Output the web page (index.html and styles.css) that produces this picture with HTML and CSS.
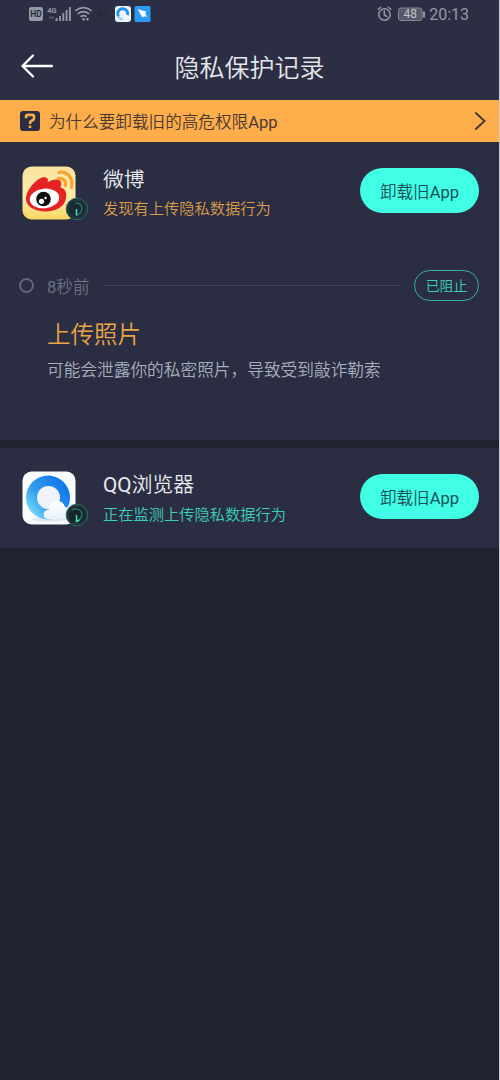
FILE: index.html
```html
<!DOCTYPE html>
<html lang="zh-CN">
<head>
<meta charset="utf-8">
<title>隐私保护记录</title>
<link rel="stylesheet" href="styles.css">
</head>
<body>
<main class="screen">
  <div class="status">
    <svg class="status-left" width="124" height="18" viewBox="28 5 124 18">
      <rect x="29" y="7" width="14" height="14" rx="2" fill="#9598a5"/>
      <text x="36" y="17.300" class="hd" text-anchor="middle">HD</text>
      <text x="47.300" y="12.800" class="net">4G</text>
      <path d="M49 17.500h5" stroke="#555969" stroke-width="2"/>
      <path d="M56.500 18v3M60 16v5M63.300 13v8M66.600 10v11M69.900 7v14" stroke="#9598a5" stroke-width="1.900"/>
      <g fill="none" stroke="#9598a5" stroke-width="1.700">
        <path d="M75.300 10.800Q83.500 4.500 91.700 10.800"/>
        <path d="M77.800 13.900Q83.500 9.500 89.200 13.900"/>
        <path d="M80.500 16.700Q83.500 14.500 86.500 16.700"/>
      </g>
      <circle cx="83.500" cy="19.200" r="1.300" fill="#9598a5"/>
      <circle cx="87.500" cy="19.200" r="1.300" fill="#9598a5"/>
      <path d="M98 11h4v6h-4zM103 10h5v8h-5z" fill="#292a38"/>
      <rect x="115" y="6" width="16" height="16" rx="3" fill="#eef4fa"/>
      <path d="M118.500 16.500A5 5 0 1 1 127.500 15" fill="none" stroke="#2492ee" stroke-width="3"/>
      <path d="M118.300 16.200Q119.500 19.500 123 19.500" fill="none" stroke="#8fd6fb" stroke-width="2"/>
      <rect x="134.500" y="6" width="16" height="16" rx="1.500" fill="#2d9bf4"/>
      <path d="M137.800 9.200l8.200 2.300-.5 2 1.300 3.500-2.800-.7-1.500 1.200-1.500-2.500z" fill="#fff"/>
    </svg>
    <div class="status-right">
      <svg width="48" height="18" viewBox="378 5 48 18">
        <g fill="none" stroke="#9598a5" stroke-width="1.500" stroke-linecap="round">
          <circle cx="385.500" cy="14.500" r="5.700"/>
          <path d="M385.300 11v4l2.500 1.500M379.200 9.300l2.500-2.100M391.800 9.300l-2.500-2.100"/>
        </g>
        <rect x="399.500" y="8" width="23.500" height="12.500" rx="2.500" fill="#555969" stroke="#858997"/>
        <path d="M425 11.500v6" stroke="#9598a5" stroke-width="2"/>
        <text x="411.300" y="18.300" class="battery" text-anchor="middle">48</text>
      </svg>
      <span class="clock">20:13</span>
    </div>
  </div>
  <header class="header">
    <svg class="back" width="32" height="24" viewBox="0 0 32 24"><path d="M31 12H1.500M12 1.500L1.500 12 12 22.500" fill="none" stroke="#fff" stroke-width="2.300" stroke-linecap="round" stroke-linejoin="round"/></svg>
    <h1 class="title">隐私保护记录</h1>
  </header>
  <div class="banner">
    <svg width="20" height="20" viewBox="0 0 20 20"><rect width="20" height="20" rx="3" fill="#2b2e42"/><path d="M6 7.200V6Q6 3.900 8 3.900H12Q14 3.900 14 6V7.200Q14 8.700 12.800 9.200L11 10Q10 10.500 10 13M10 14.500v2.500" fill="none" stroke="#fbae4c" stroke-width="2.600"/></svg>
    <span class="banner-text">为什么要卸载旧的高危权限<span class="latin">App</span></span>
    <svg width="12" height="20" viewBox="0 0 12 20"><path d="M1.300 1.500L10.500 10 1.300 18.500" fill="none" stroke="#443a3d" stroke-width="2"/></svg>
  </div>

  <section class="card card-weibo">
    <div class="app">
      <div class="app-icon">
        <svg width="54" height="54" viewBox="0 0 54 54">
          <defs><linearGradient id="cream" x2="0" y2="1"><stop stop-color="#fae2a0"/><stop offset=".55" stop-color="#fdecab"/><stop offset="1" stop-color="#f8d863"/></linearGradient></defs>
          <rect x=".5" y=".5" width="53" height="53" rx="9" fill="url(#cream)"/>
          <path d="M4 31C5 24 13 14 20 11.500C25 10.500 27 13 25.500 16.500C30 13.500 37 12 39 16C40 18 38.500 20 38.500 21.500C43 22.500 45 26 44 32C43 41 33 46 22 45.500C12 45 3 40 4 31Z" fill="#e52324"/>
          <ellipse cx="22.500" cy="32.500" rx="14.800" ry="9.800" transform="rotate(-6 22.500 32.500)" fill="#fff"/>
          <circle cx="21.500" cy="33" r="7.300" fill="#101010"/>
          <circle cx="19.500" cy="35.300" r="2.600" fill="#fff"/><circle cx="23.500" cy="32" r="1.200" fill="#fff"/>
          <path d="M37 6.500C45 4.500 51.500 12 49.500 21.500M36 12.500C41.500 12 44.500 15 43.500 19.500" fill="none" stroke="#f9a331" stroke-width="3.200" stroke-linecap="round"/>
        </svg>
        <svg class="badge" width="24" height="24" viewBox="0 0 24 24"><circle cx="12" cy="12" r="10.800" fill="#202a36" stroke="#247068"/><circle cx="12" cy="12" r="9" fill="#1a2933" stroke="#22534f" stroke-width=".7"/><path d="M10 6H12.500Q17 7 17 12Q16.500 16.500 11.500 18.500" fill="none" stroke="#2a8277" stroke-width="1.200"/><path d="M11.500 12v6.500" stroke="#35e4c7" stroke-width="1.500"/></svg>
      </div>
      <div class="app-copy"><h2 class="app-name">微博</h2><p class="app-state warning">发现有上传隐私数据行为</p></div>
      <button class="uninstall">卸载旧<span class="latin">App</span></button>
    </div>
    <div class="event-head"><i class="dot"></i><span class="time"><span class="latin">8</span>秒前</span><i class="line"></i><span class="blocked">已阻止</span></div>
    <div class="event-copy"><h3 class="event-title">上传照片</h3><p class="event-detail">可能会泄露你的私密照片，导致受到敲诈勒索</p></div>
  </section>

  <section class="card card-browser">
    <div class="app">
      <div class="app-icon">
        <svg width="54" height="54" viewBox="0 0 54 54">
          <defs>
            <linearGradient id="ring" x1="0" y1=".85" x2=".8" y2=".2"><stop stop-color="#81e5ff"/><stop offset=".45" stop-color="#349eee"/><stop offset="1" stop-color="#137be8"/></linearGradient>
            <linearGradient id="cloud" x2="0" y2="1"><stop stop-color="#fff"/><stop offset="1" stop-color="#e8f1f9"/></linearGradient>
          </defs>
          <rect x=".5" y=".5" width="53" height="53" rx="9" fill="#fafbfe"/>
          <ellipse cx="27" cy="48.500" rx="17" ry="2" fill="#e3e8ed"/>
          <circle cx="26" cy="26.500" r="22" fill="url(#ring)"/>
          <circle cx="26.500" cy="26.500" r="11.500" fill="#f0f3f9"/>
          <path d="M26 48C20 48 20 39 27 38.500Q27 31 34 30Q41 29 43 36Q50 36 51 42Q51 48 46 48Z" fill="url(#cloud)"/>
        </svg>
        <svg class="badge" width="24" height="24" viewBox="0 0 24 24"><circle cx="12" cy="12" r="10.800" fill="#202a36" stroke="#247068"/><circle cx="12" cy="12" r="9" fill="#172429" stroke="#22534f" stroke-width=".7"/><path d="M7 7Q9 5.500 12 6Q17 7 17 12Q17 15 14 17" fill="none" stroke="#2a8277" stroke-width="1.200"/><path d="M11.500 12v6.500l3-1.500" fill="none" stroke="#35e4b7" stroke-width="1.500"/></svg>
      </div>
      <div class="app-copy"><h2 class="app-name"><span class="latin">QQ</span>浏览器</h2><p class="app-state active">正在监测上传隐私数据行为</p></div>
      <button class="uninstall">卸载旧<span class="latin">App</span></button>
    </div>
  </section>
</main>
</body>
</html>
```
FILE: styles.css
```css
* { box-sizing: border-box; }
body { margin: 0; background: #1f2230; font-family: Roboto, "Noto Sans CJK SC", sans-serif; font-weight: 350; }
h1, h2, h3, p { margin: 0; font-weight: inherit; }
svg { display: block; flex: none; }
.latin { font-weight: 400; }
.screen { width: 500px; height: 1080px; background: #1f2230; border-right: 1px solid #c9cad2; overflow: hidden; }
.status { height: 28px; padding: 5px 30px 0 28px; display: flex; justify-content: space-between; background: #2c2e44; }
.status-right { display: flex; gap: 4px; }
.clock { font-size: 16px; font-weight: 400; line-height: 19px; color: #9598a5; }
.hd { font: bold 8.500px Roboto, sans-serif; fill: #2c2e44; }
.net { font: bold 7.500px Roboto, sans-serif; fill: #9598a5; }
.battery { font: 400 12px Roboto, sans-serif; fill: #c1c4cd; }
.header { height: 72px; background: #2c2e44; display: grid; grid-template-columns: 75px 1fr 75px; align-items: center; padding-top: 8px; }
.back { margin: 0 0 4px 21px; }
.title { font-size: 25px; line-height: 36px; padding-top: 1px; text-align: center; color: #e5e6eb; }
.banner { height: 42px; padding: 0 13px 0 20px; display: flex; align-items: center; background: #fdae4b; }
.banner-text { flex: 1; margin-left: 9px; padding-top: 4px; font-size: 16.600px; line-height: 24px; color: #4b3a32; white-space: nowrap; }
.card { background: #2b2e42; }
.card-weibo { height: 298px; padding-top: 23px; }
.card-browser { height: 100px; margin-top: 8px; padding-top: 23px; }
.app { height: 56px; padding: 0 20px 0 22px; display: flex; align-items: flex-start; }
.app-icon { position: relative; width: 54px; height: 54px; flex: none; margin-top: 1px; }
.card-browser .app-icon { margin-top: 0; }
.badge { position: absolute; left: 43px; top: 31px; }
.card-browser .badge { top: 32px; }
.app-copy { flex: 1; margin-left: 27px; }
.app-name { font-size: 20.800px; line-height: 28px; padding-top: 1px; color: #e8eaee; }
.card-browser .app-name { padding: 0 0 1px; }
.app-state { font-size: 15.250px; line-height: 22px; margin-top: 4px; white-space: nowrap; }
.warning { color: #dc9d4b; }
.active { color: #3bd0bc; }
.uninstall { width: 119px; height: 45px; margin-top: 3px; padding: 0; border: 0; border-radius: 23px; background: #40ffe4; color: #1c505a; font: inherit; font-size: 16.600px; }
.event-head { display: flex; align-items: center; height: 31px; margin-top: 49px; padding: 0 20px 0 19px; }
.dot { width: 15px; height: 15px; border: 2px solid #63677a; border-radius: 50%; flex: none; }
.time { width: 56px; margin-left: 13px; padding-top: 4px; font-size: 16.600px; line-height: 24px; color: #6d7183; }
.line { flex: 1; height: 1px; margin: 0 14px 0 1px; background: #45485a; }
.blocked { width: 65px; height: 31px; border: 1.500px solid #35af9f; border-radius: 16px; font-size: 13.900px; line-height: 30px; text-align: center; color: #38d1bb; }
.event-copy { padding: 16px 0 0 47px; }
.event-title { font-size: 23.500px; line-height: 36px; color: #eba446; }
.event-detail { margin-top: 6px; font-size: 16.700px; line-height: 24px; color: #a9aebe; white-space: nowrap; }
```
